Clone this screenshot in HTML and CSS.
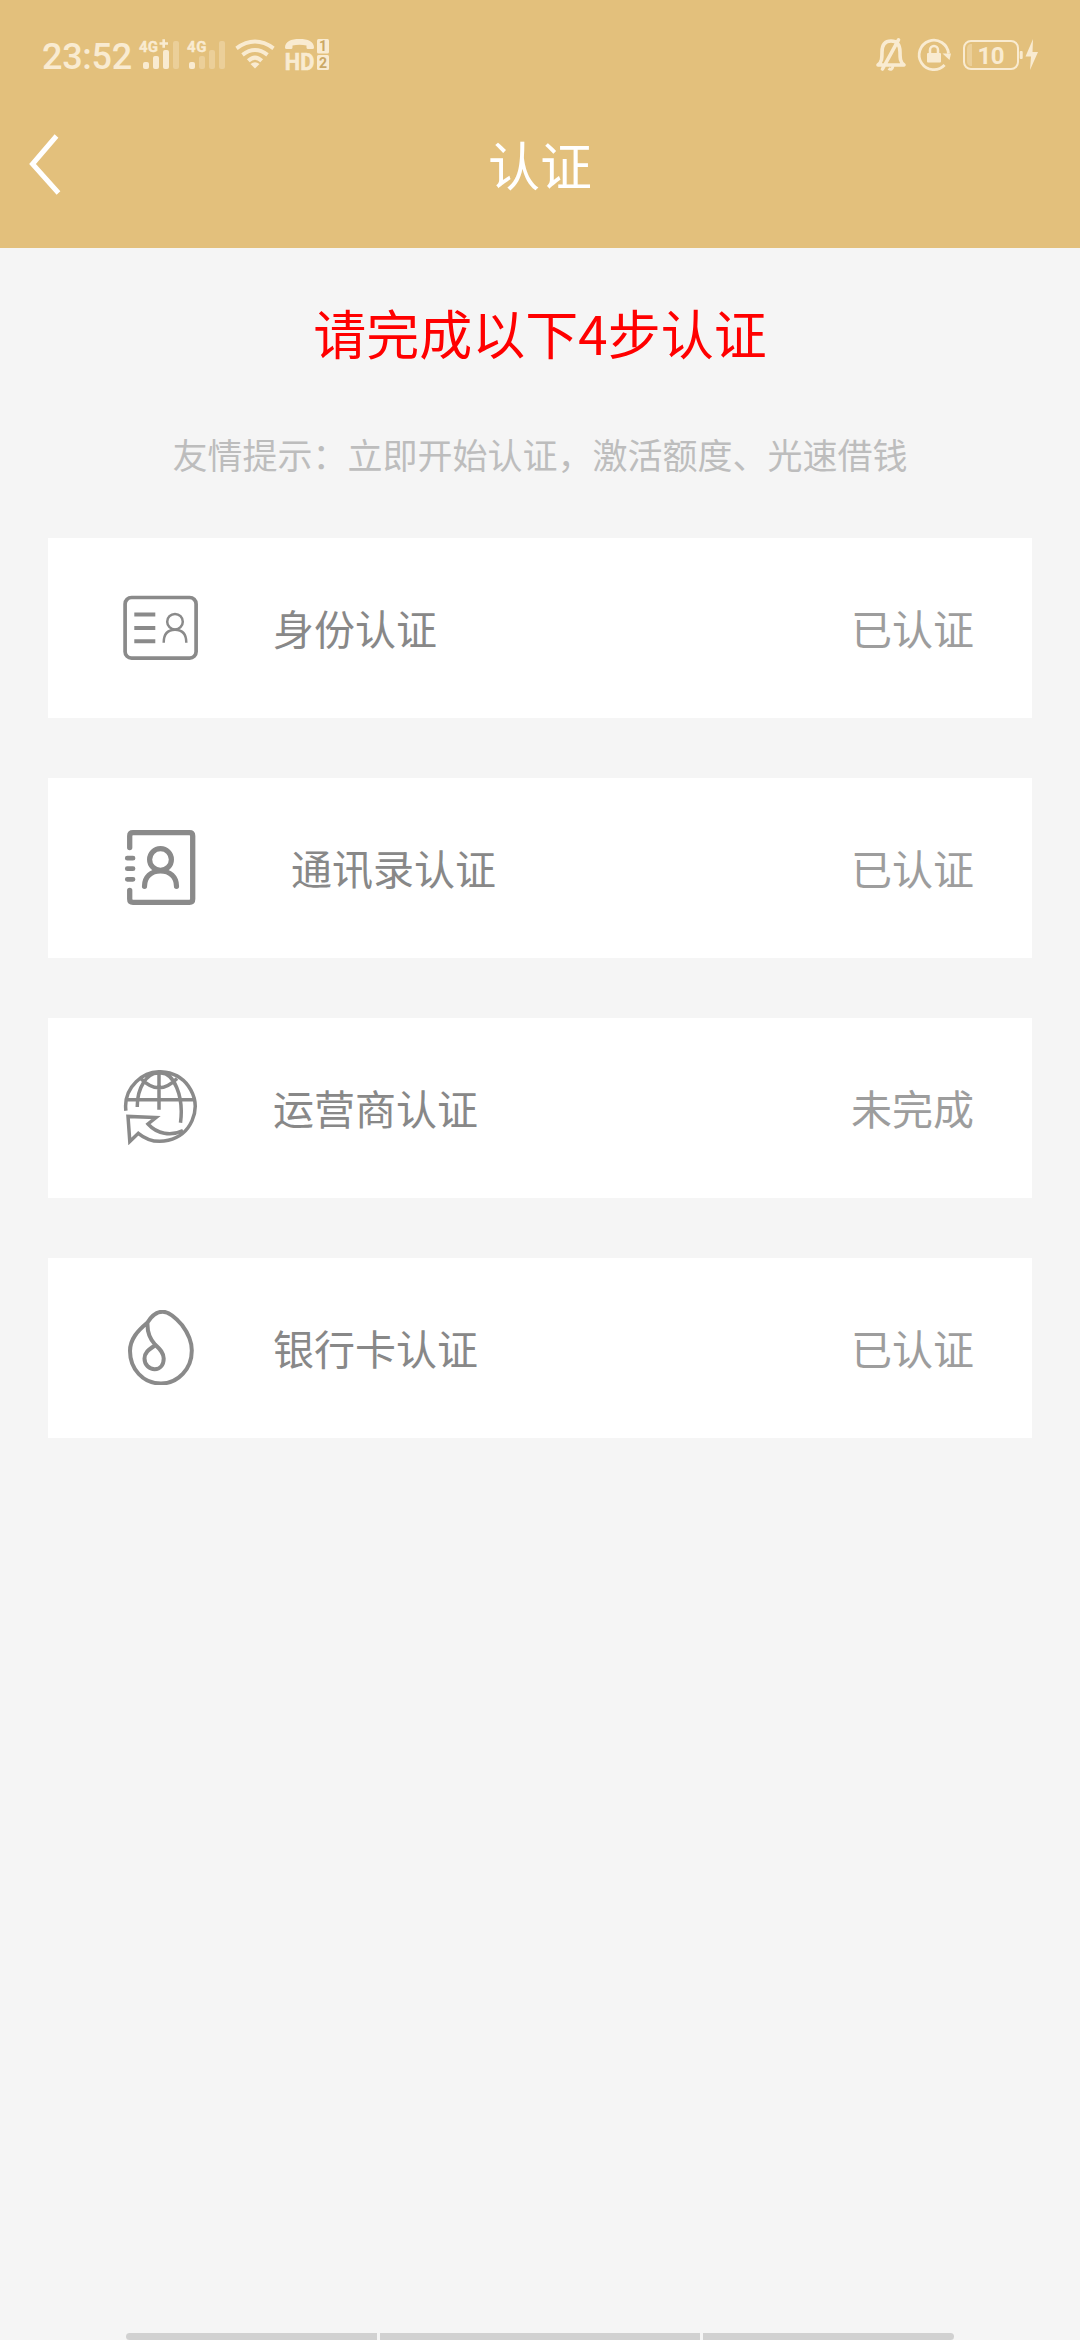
FILE: index.html
```html
<!DOCTYPE html>
<html lang="zh-CN">
<head>
<meta charset="utf-8">
<title>认证</title>
<link rel="stylesheet" href="styles.css">
</head>
<body>
<div class="screen">
  <header class="header">
    <div class="statusbar">
      <div class="status-left">
        <span class="clock">23:52</span>
        <svg class="signal" width="42" height="34" viewBox="138 38 42 34">
          <text class="net" x="139" y="51.5" textLength="19">4G</text>
          <path class="line" d="M159.5 43.5h8.5M163.7 39.2v8.6" stroke-width="2.6"/>
          <rect x="143" y="62" width="6" height="7" rx="2"/>
          <rect x="153" y="56" width="6" height="13" rx="2"/>
          <rect x="163" y="50" width="6" height="19" rx="2"/>
          <rect class="faint" x="173" y="41" width="6" height="28" rx="2"/>
        </svg>
        <svg class="signal-second" width="40" height="34" viewBox="186 38 40 34">
          <text class="net" x="187" y="52" textLength="19.5">4G</text>
          <rect x="189" y="62" width="6" height="7" rx="2"/>
          <rect class="faint" x="199" y="56" width="6" height="13" rx="2"/>
          <rect class="faint" x="209" y="50" width="6" height="19" rx="2"/>
          <rect class="faint" x="219" y="41" width="6" height="28" rx="2"/>
        </svg>
        <svg class="wifi" width="42" height="34" viewBox="234 38 42 34">
          <path class="line" d="M236.5 48.3Q255 34.8 273.5 48.3M242.5 54.8Q255 45.2 267.5 54.8M248.3 60.8Q255 54.4 261.7 60.8" stroke-width="4"/>
          <path d="M250.5 64Q255 60.5 259.5 64L255 68.5Z"/>
        </svg>
        <svg class="hd" width="46" height="34" viewBox="284 38 46 34">
          <path d="M285 47.500C285 41.500 291 39 299.500 39S314 41.500 314 47.500Q314 49 312.500 49H308Q306.500 49 306.500 47.500V45.500Q299.500 43.800 292.500 45.500V47.500Q292.500 49 291 49H286.500Q285 49 285 47.500Z"/>
          <text class="hd-text" x="284.800" y="69.500" textLength="29.500" lengthAdjust="spacingAndGlyphs">HD</text>
          <rect x="317" y="39" width="12" height="14.600" rx="1.500"/>
          <rect x="317" y="55" width="12" height="15" rx="1.500"/>
          <text class="sim" x="323" y="51.200">1</text>
          <text class="sim" x="323" y="67.500">2</text>
        </svg>
      </div>
      <div class="status-right">
        <svg width="32" height="34" viewBox="875 38 32 34">
          <path class="line" d="M878 65C882 62 882 58 882 52Q882 41 891 41Q900 41 900 52C900 58 900 62 904 65ZM898.500 39.800L882.500 69" stroke-width="3.600" stroke-linejoin="round" stroke-linecap="round"/>
          <path class="line" d="M888.500 68.500Q892 71 893 66" stroke-width="3"/>
        </svg>
        <svg class="lock" width="34" height="34" viewBox="917 38 34 34">
          <path class="line" d="M948.500 53.500A14.700 14.700 0 1 0 944.600 65" stroke-width="2.800"/>
          <path d="M942.500 53.500H951L949.500 60Z"/>
          <rect x="927" y="53" width="14" height="9.500" rx="1"/>
          <path class="line" d="M930 54V50a4 4 0 0 1 8 0V54" stroke-width="2.500"/>
        </svg>
        <svg class="battery" width="77" height="34" viewBox="962 38 77 34">
          <rect class="line" x="964" y="41" width="54" height="28" rx="7" stroke-width="2"/>
          <path class="faint" d="M972 44H970Q967 45 967 49V61Q967 65 970 66H972Z"/>
          <text class="level" x="977.500" y="63.500" textLength="27">10</text>
          <rect x="1019.700" y="51" width="3" height="8" rx="1"/>
          <path d="M1033 39L1025.500 56.500H1031L1030 70L1038 52H1032.500Z"/>
        </svg>
      </div>
    </div>
    <div class="navbar">
      <svg class="back" width="34" height="64" viewBox="0 0 34 64">
        <path d="M28.500 4L4.500 32L30.500 61"/>
      </svg>
      <h1 class="title">认证</h1>
    </div>
  </header>
  <main class="content">
    <h2 class="headline">请完成以下4步认证</h2>
    <p class="hint">友情提示：立即开始认证，激活额度、光速借钱</p>
    <ul class="steps">
      <li class="step">
        <svg class="icon" viewBox="0 0 75 75">
          <rect x="2.100" y="7.500" width="71" height="60.700" rx="6.500" stroke-width="3.700"/>
          <path d="M11.300 24.500H32.300M11.300 38H32.300M11.300 51.200H32.300" stroke-width="4"/>
          <circle cx="52" cy="31.700" r="7.800" stroke-width="2.500"/>
          <path d="M40.700 52.700C40.700 43 46 39.800 52 39.800S63.300 43 63.300 52.700" stroke-width="2.500"/>
        </svg>
        <span class="name">身份认证</span>
        <span class="state">已认证</span>
      </li>
      <li class="step">
        <svg class="icon" viewBox="0 0 75 75">
          <path d="M6.700 17.500V6Q6.700 2.700 10 2.700H66.500Q69.700 2.700 69.700 6V69Q69.700 72.300 66.500 72.300H10Q6.700 72.300 6.700 69V60.300" stroke-width="5.300" stroke-linecap="round"/>
          <path d="M4.300 28.200H10M4.300 38.700H10M4.300 49.300H10" stroke-width="4.800" stroke-linecap="round"/>
          <circle cx="37.500" cy="29.500" r="10.900" stroke-width="5.200"/>
          <path d="M21.500 56.300C21.500 47 28 41 37.500 41S53.500 47 53.500 56.300" stroke-width="5.200" stroke-linecap="round"/>
        </svg>
        <span class="name name-indented">通讯录认证</span>
        <span class="state">已认证</span>
      </li>
      <li class="step">
        <svg class="icon" viewBox="0 0 75 75">
          <path d="M2.900 40.700A34.700 34.700 0 1 1 15.300 63.300L6.800 71.500L5 46.400L33 47.500L25 54C34 64 48 66.500 60 60.500M2 29.700H72.700M36 2V39.700M36 3C24 2 14 18 14.300 37M36 3C51 1 61 27 57.500 52.700M17.700 8.500Q36 27 54 8.500" stroke-width="3.500"/>
        </svg>
        <span class="name">运营商认证</span>
        <span class="state">未完成</span>
      </li>
      <li class="step">
        <svg class="icon" viewBox="0 0 75 75">
          <path d="M24.500 12.500C29 5 34 1.700 39.700 1.700C45 1.700 53 8 59 15C65 23 68.800 32 68.800 40.500C68.800 59 55 73.500 38 73.500C20 73.500 7 59 7 41C7 29 15 20.500 24.500 12.500C24 22 26 28 32 34.500C37.500 39.500 40.700 43 40.700 48.500C40.700 55 37 59.200 31.700 59.200S21.500 55 21.500 48.500C21.500 43 25 40 32 35.500" stroke-width="4"/>
        </svg>
        <span class="name">银行卡认证</span>
        <span class="state">已认证</span>
      </li>
    </ul>
  </main>
  <footer class="gesture-bar">
    <span class="segment segment-left"></span>
    <span class="segment segment-middle"></span>
    <span class="segment segment-right"></span>
  </footer>
</div>
</body>
</html>
```
FILE: styles.css
```css
* {
  box-sizing: border-box;
  margin: 0;
  padding: 0;
}

body {
  background: #f5f5f5;
  font-family: "Noto Sans CJK SC", sans-serif;
}

.screen {
  display: flex;
  flex-direction: column;
  width: 1080px;
  height: 2340px;
  overflow: hidden;
}

.header {
  height: 248px;
  background: #e3c07c;
}

.statusbar {
  display: flex;
  justify-content: space-between;
  height: 84px;
  padding: 38px 41px 0 42px;
  color: #f9ebd1;
  font-family: Roboto, sans-serif;
}

.status-left,
.status-right {
  display: flex;
  height: 34px;
}

.statusbar svg {
  flex: none;
  fill: #f9ebd1;
  overflow: visible;
}

.statusbar .line {
  fill: none;
  stroke: #f9ebd1;
}

.statusbar .faint {
  opacity: 0.35;
}

.clock {
  width: 96px;
  font-size: 36px;
  font-weight: 500;
  line-height: 38px;
  letter-spacing: -0.3px;
  white-space: nowrap;
}

.signal-second {
  margin-left: 6px;
}

.wifi,
.hd {
  margin-left: 8px;
}

.lock {
  margin-left: 10px;
}

.battery {
  margin-left: 11px;
}

.net {
  font-size: 15px;
  font-weight: 700;
  stroke: #f9ebd1;
  stroke-width: 0.4;
}

.hd-text {
  font-size: 23.5px;
  font-weight: 700;
  stroke: #f9ebd1;
  stroke-width: 0.6;
}

.sim {
  fill: #cba865;
  font-size: 14px;
  font-weight: 700;
  text-anchor: middle;
}

.level {
  font-size: 24px;
  font-weight: 700;
}

.navbar {
  display: grid;
  grid-template-columns: 120px 1fr 120px;
  align-items: center;
  height: 164px;
  padding-bottom: 4px;
}

.back {
  margin-left: 28px;
  fill: none;
  stroke: #fff;
  stroke-width: 5;
}

.title {
  color: #fff;
  font-size: 52px;
  font-weight: 400;
  line-height: 76px;
  text-align: center;
}

.content {
  flex: 1;
  padding: 0 48px;
}

.headline {
  margin-top: 46px;
  color: #f00;
  font-size: 53px;
  font-weight: 400;
  line-height: 76px;
  text-align: center;
}

.hint {
  margin-top: 59px;
  color: #bdbdbd;
  font-size: 35px;
  line-height: 50px;
  text-align: center;
}

.steps {
  display: grid;
  gap: 60px;
  margin-top: 59px;
  list-style: none;
}

.step {
  display: flex;
  align-items: center;
  height: 180px;
  padding: 0 58px 2px 75px;
  background: #fff;
  font-size: 41px;
  line-height: 60px;
}

.icon {
  width: 75px;
  height: 75px;
  fill: none;
  stroke: #8a8a8a;
}

.name {
  margin-left: 75px;
  color: #888;
}

.name-indented {
  padding-left: 18px;
}

.state {
  margin-left: auto;
  color: #9d9d9d;
}

.gesture-bar {
  display: flex;
  gap: 3px;
  height: 7px;
  padding: 0 126px;
}

.segment {
  background: #d1d1d1;
}

.segment-left {
  flex: 251;
  border-radius: 4px 0 0 4px;
}

.segment-middle {
  flex: 320;
}

.segment-right {
  flex: 251;
  border-radius: 0 4px 4px 0;
}
```
